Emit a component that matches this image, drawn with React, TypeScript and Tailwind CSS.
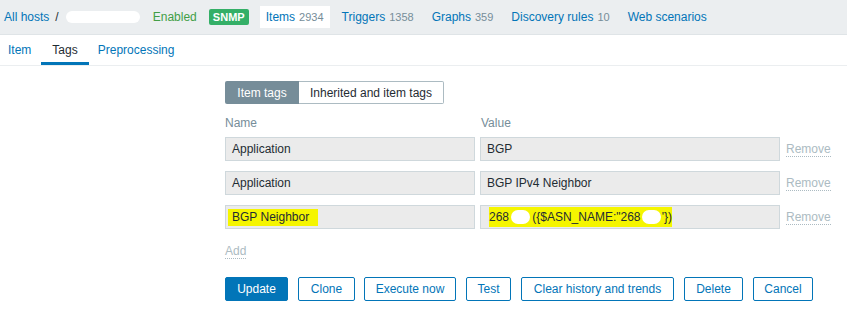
import React from 'react';

const navItems = [
  { label: 'Items', count: '2934', active: true },
  { label: 'Triggers', count: '1358' },
  { label: 'Graphs', count: '359' },
  { label: 'Discovery rules', count: '10' },
  { label: 'Web scenarios', count: '' },
];

const tags = [
  { name: 'Application', value: 'BGP' },
  { name: 'Application', value: 'BGP IPv4 Neighbor' },
];

const buttons = [
  { label: 'Clone', w: 'w-[57px]', ml: 'ml-[10px]' },
  { label: 'Execute now', w: 'w-[92px]', ml: 'ml-[9px]' },
  { label: 'Test', w: 'w-[45px]', ml: 'ml-[10px]' },
  { label: 'Clear history and trends', w: 'w-[153px]', ml: 'ml-[10px]' },
  { label: 'Delete', w: 'w-[59px]', ml: 'ml-[10px]' },
  { label: 'Cancel', w: 'w-[60px]', ml: 'ml-[10px]' },
];

const App: React.FC = () => {
  return (
    <div className="w-[847px] h-[310px] bg-white text-[12px] text-[#1f2c33] font-['Liberation_Sans',Arial,sans-serif] overflow-hidden">
      {/* host breadcrumb bar */}
      <div className="h-[35px] bg-[#ebeef0] border-b border-[#dfe4e7] flex items-center pl-[4px]">
        <span className="text-[#0275b8]">All hosts</span>
        <span className="ml-[6px] text-[#1f2c33]">/</span>
        <span className="ml-[7px] w-[74px] h-[12px] rounded-[6px] bg-white"></span>
        <span className="ml-[13px] text-[#429e47]">Enabled</span>
        <span className="ml-[12px] h-[16px] w-[40px] rounded-[2px] bg-[#34af67] text-white font-bold text-[11px] flex items-center justify-center">SNMP</span>
        <div className="ml-[11px] flex items-center gap-[6px]">
          {navItems.map((n) => (
            <span
              key={n.label}
              className={n.active ? 'px-[6px] h-[22px] flex items-center bg-white text-[#0275b8]' : 'px-[6px] h-[22px] flex items-center text-[#0275b8]'}
            >
              {n.label}
              {n.count && <span className="ml-[4px] text-[11px] text-[#768d99]">{n.count}</span>}
            </span>
          ))}
        </div>
      </div>

      {/* tabs */}
      <div className="h-[31px] border-b border-[#ebeef0] flex items-stretch">
        <span className="pl-[8px] pr-[10px] flex items-center text-[#0275b8]">Item</span>
        <span className="px-[11px] flex items-center border-b-[3px] border-[#0275b8] pt-[3px] text-[#1f2c33]">Tags</span>
        <span className="px-[9px] flex items-center text-[#0275b8]">Preprocessing</span>
      </div>

      <div className="pl-[225px] pt-[15px]">
        {/* tag source toggle */}
        <div className="flex h-[23px] w-fit">
          <span className="w-[74px] flex items-center justify-center bg-[#768d99] text-white rounded-l-[2px]">Item tags</span>
          <span className="w-[145px] flex items-center justify-center border border-l-0 border-[#acbbc2] rounded-r-[2px] bg-white">Inherited and item tags</span>
        </div>

        <div className="flex mt-[11px] h-[15px] items-center text-[#768d99]">
          <span className="w-[256px]">Name</span>
          <span>Value</span>
        </div>

        <div className="mt-[7px] flex flex-col gap-[10px]">
          {tags.map((t, i) => (
            <div key={i} className="flex items-center">
              <div className="w-[250px] h-[24px] border border-[#cfd8dc] bg-[#ebebeb] pl-[6px] flex items-center">{t.name}</div>
              <div className="ml-[5px] w-[300px] h-[24px] border border-[#cfd8dc] bg-[#ebebeb] pl-[6px] flex items-center">{t.value}</div>
              <span className="ml-[6px] text-[#acbbc2] border-b border-dotted border-[#acbbc2] leading-[14px]">Remove</span>
            </div>
          ))}
          <div className="flex items-center">
            <div className="w-[250px] h-[24px] border border-[#cfd8dc] bg-[#ebebeb] pl-[2px] flex items-center">
              <span className="bg-[#f5f500] h-[17px] w-[90px] pl-[4px] flex items-center">BGP Neighbor</span>
            </div>
            <div className="ml-[5px] w-[300px] h-[24px] border border-[#cfd8dc] bg-[#ebebeb] pl-[8px] flex items-center">
              <span className="bg-[#f5f500] h-[20px] w-[183px] flex items-center">
                268
                <span className="mx-[2px] w-[21px] h-[14px] rounded-[7px] bg-white"></span>
                {'({$ASN_NAME:"268'}
                <span className="mx-[1px] w-[21px] h-[14px] rounded-[7px] bg-white"></span>
                {"'})"}
              </span>
            </div>
            <span className="ml-[6px] text-[#acbbc2] border-b border-dotted border-[#acbbc2] leading-[14px]">Remove</span>
          </div>
        </div>

        <div className="mt-[13px]">
          <span className="text-[#acbbc2] border-b border-dotted border-[#acbbc2]">Add</span>
        </div>

        <div className="mt-[17px] flex">
          <button className="h-[24px] w-[63px] bg-[#0275b8] border border-[#0275b8] text-white rounded-[2px]">Update</button>
          {buttons.map((b) => (
            <button key={b.label} className={`h-[24px] ${b.w} ${b.ml} bg-white border border-[#0275b8] text-[#0275b8] rounded-[2px]`}>
              {b.label}
            </button>
          ))}
        </div>
      </div>
    </div>
  );
};

export default App;
